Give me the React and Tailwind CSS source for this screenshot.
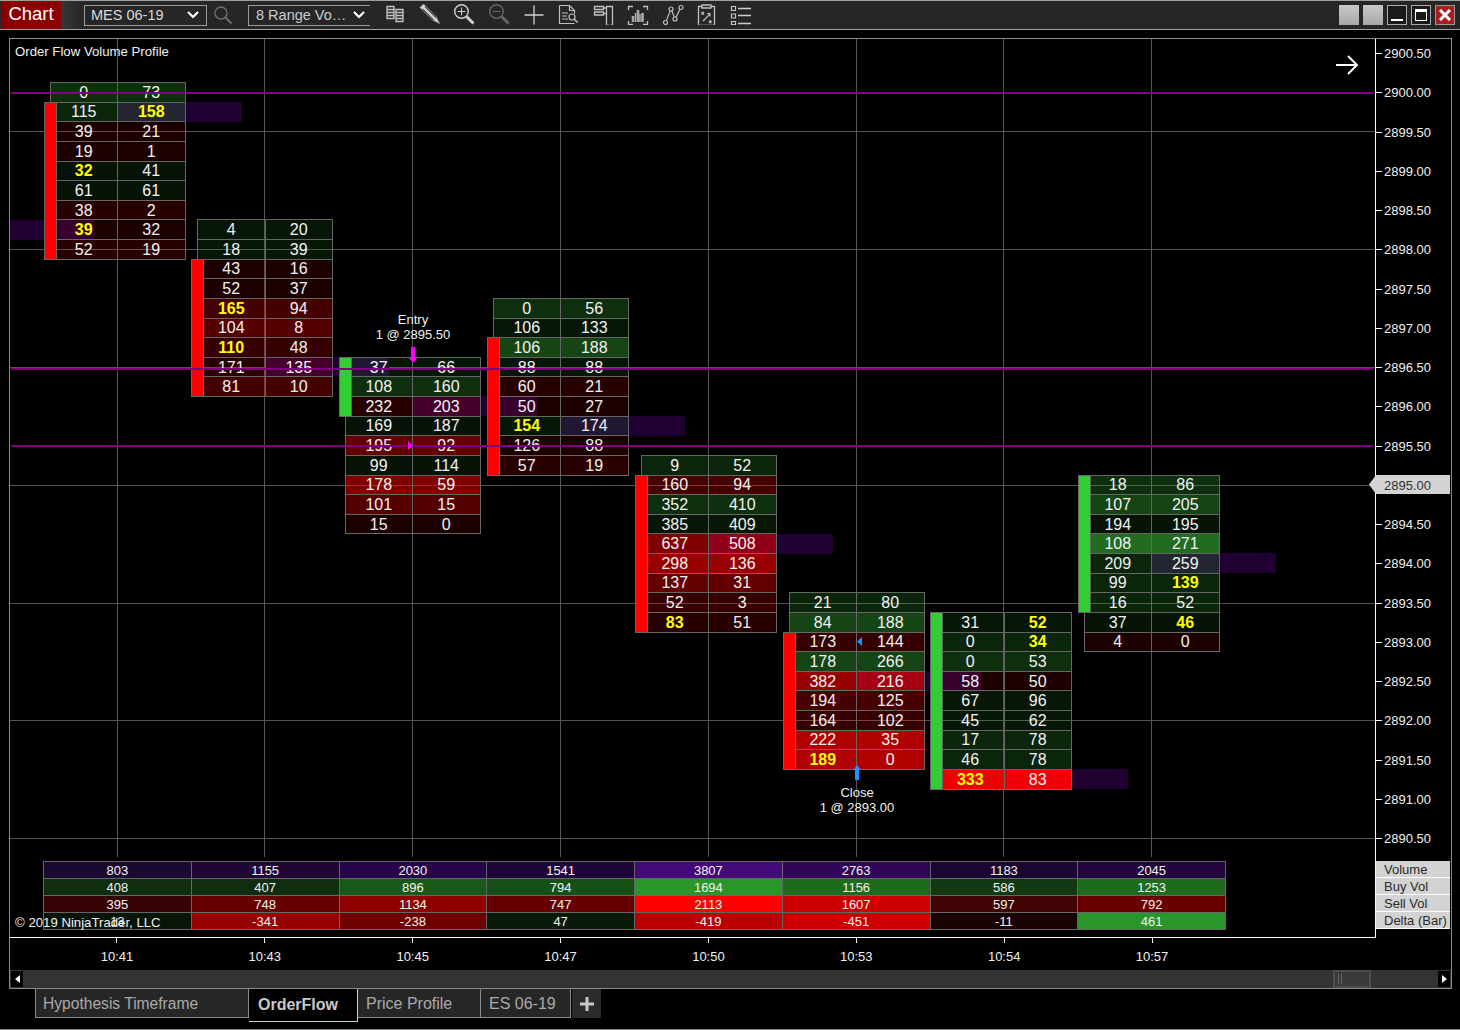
import React from "react";

const ROW = 19.625;
const yOf = (p) => 14 + (2900.5 - p) * 78.5; // y inside the price pane
const CENTERS = [117.5, 265, 412.5, 560.5, 708.5, 856.5, 1004, 1151.5];
const cx = (c) => c - 10; // x inside the price pane

const BG = {
  a: "bg-[#309a30]/12",
  b: "bg-[#309a30]/15",
  c: "bg-[#309a30]/24",
  d: "bg-[#309a30]/30",
  e: "bg-[#309a30]/44",
  f: "bg-[#309a30]/70",
  h: "bg-[#ff0000]/11",
  i: "bg-[#ff0000]/16",
  j: "bg-[#ff0000]/21",
  k: "bg-[#ff0000]/27",
  l: "bg-[#ff0000]/33",
  m: "bg-[#ff0000]/39",
  n: "bg-[#ff0000]/50",
  o: "bg-[#ff0000]/60",
  p: "bg-[#ff0000]/69",
  q: "bg-[#ff0000]/92",
};

const CANDLES = [
  {
    c: 0, price: 2900, body: [1, 8], up: false,
    rows: "0|73|d 115|158*|c 39|21|h 19|1|h 32*|41|a 61|61|a 38|2|i 39*|32|h 52|19|i",
  },
  {
    c: 1, price: 2898.25, body: [2, 8], up: false,
    rows: "4|20|b 18|39|b 43|16|h 52|37|h 165*|94|k 104|8|l 110*|48|j 171|135|i 81|10|k",
  },
  {
    c: 2, price: 2896.5, body: [0, 2], up: true,
    rows: "37|66|b 108|160|d 232|203|i 169|187|a 195|92|m 99|114|a 178|59|n 101|15|l 15|0|h",
  },
  {
    c: 3, price: 2897.25, body: [2, 8], up: false,
    rows: "0|56|d 106|133|b 106|188|e 88|88|b 60|21|i 50|27|h 154*|174|b 126|88|h 57|19|i",
  },
  {
    c: 4, price: 2895.25, body: [1, 8], up: false,
    rows: "9|52|c 160|94|k 352|410|d 385|409|b 637|508|n 298|136|o 137|31|m 52|3|j 83*|51|i",
  },
  {
    c: 5, price: 2893.5, body: [2, 8], up: false,
    rows: "21|80|c 84|188|e 173|144|j 178|266|e 382|216|o 194|125|k 164|102|j 222|35|p 189*|0|p",
  },
  {
    c: 6, price: 2893.25, body: [0, 8], up: true,
    rows: "31|52*|b 0|34*|c 0|53|d 58|50|h 67|96|b 45|62|b 17|78|c 46|78|c 333*|83|q",
  },
  {
    c: 7, price: 2895, body: [0, 6], up: true,
    rows: "18|86|d 107|205|e 194|195|a 108|271|f 209|259|c 99|139*|c 16|52|c 37|46*|a 4|0|h",
  },
];

// volume-profile bars: [centre x of the bar's origin, price]
const BARS = [
  [-30.5, 2898.25],
  [117.5, 2899.75],
  [265, 2896.5],
  [412.5, 2896],
  [560.5, 2895.75],
  [708.5, 2894.25],
  [856.5, 2892.5],
  [1004, 2891.25],
  [1151.5, 2894],
];

const TABLE = [
  [["803", "bg-[#1a0a30]"], ["1155", "bg-[#1f0633]"], ["2030", "bg-[#260648]"], ["1541", "bg-[#1f0638]"], ["3807", "bg-[#440a77]"], ["2763", "bg-[#300558]"], ["1183", "bg-[#1b0633]"], ["2045", "bg-[#21053c]"]],
  [["408", "bg-[#0f2d0f]"], ["407", "bg-[#0f2d0f]"], ["896", "bg-[#185818]"], ["794", "bg-[#175017]"], ["1694", "bg-[#2a962a]"], ["1156", "bg-[#1e6b1e]"], ["586", "bg-[#123a12]"], ["1253", "bg-[#1e6b1e]"]],
  [["395", "bg-[#350303]"], ["748", "bg-[#660000]"], ["1134", "bg-[#900000]"], ["747", "bg-[#660000]"], ["2113", "bg-[#ff0000]"], ["1607", "bg-[#cc0000]"], ["597", "bg-[#400404]"], ["792", "bg-[#6a0000]"]],
  [["13", "bg-[#081408]"], ["-341", "bg-[#990000]"], ["-238", "bg-[#6f0000]"], ["47", "bg-[#0a1a0a]"], ["-419", "bg-[#bb0000]"], ["-451", "bg-[#cc0000]"], ["-11", "bg-[#1a0303]"], ["461", "bg-[#2a962a]"]],
];

const TIMES = ["10:41", "10:43", "10:45", "10:47", "10:50", "10:53", "10:54", "10:57"];
const PRICES = Array.from({ length: 21 }, (_, i) => (2900.5 - i * 0.5).toFixed(2));

function Candle({ candle }) {
  const rows = candle.rows.split(" ").map((r) => r.split("|"));
  return (
    <div
      className="absolute grid grid-cols-2 auto-rows-[19.625px] w-[136px] border-t border-l border-[#666]"
      style={{ left: cx(CENTERS[candle.c]) - 68, top: yOf(candle.price) - ROW / 2 - 0.4 }}
    >
      {rows.map(([l, r, col], i) => (
        <React.Fragment key={i}>
          <Cell v={l} bg={BG[col]} />
          <Cell v={r} bg={BG[col]} />
        </React.Fragment>
      ))}
    </div>
  );
}

function Cell({ v, bg }) {
  const hot = v.endsWith("*");
  return (
    <div
      className={`flex items-center justify-center pt-px border-r border-b border-[#666] text-[16px] leading-none ${bg} ${
        hot ? "font-bold text-[#ffff00]" : "text-[#f2f2f2]"
      }`}
    >
      {hot ? v.slice(0, -1) : v}
    </div>
  );
}

function Body({ candle }) {
  const [from, to] = candle.body;
  return (
    <div
      className={`absolute w-[13px] border border-[#666] ${candle.up ? "bg-[#32cd32]" : "bg-[#ff0000]"}`}
      style={{
        left: cx(CENTERS[candle.c]) - 74,
        top: yOf(candle.price) - ROW / 2 - 0.4 + from * ROW,
        height: (to - from + 1) * ROW + 1,
      }}
    />
  );
}

const S = "#c0c0c0";

function ToolIcon({ className = "", children }) {
  return (
    <svg width="22" height="22" viewBox="0 0 22 22" fill="none" stroke={S} strokeWidth="1" className={`shrink-0 ${className}`}>
      {children}
    </svg>
  );
}

function Chevron() {
  return (
    <svg width="12" height="8" viewBox="0 0 12 8" fill="none" stroke="#fff" strokeWidth="2.2" className="shrink-0">
      <path d="M1 1l5 5 5-5" />
    </svg>
  );
}

function Toolbar() {
  return (
    <div className="flex items-center h-[30px] shrink-0 bg-[#262626] border-t border-b border-[#a0a0a0]">
      <div className="flex items-center justify-center h-[28px] w-[60px] ml-px pb-px bg-[#8b0000] text-white text-[18.500px] leading-none">Chart</div>
      <div className="w-[23px] h-[28px] bg-gradient-to-r from-[#363636] to-[#262626]" />
      <div className="flex items-center justify-between h-[21px] w-[123px] pl-[6px] pr-[7px] border border-[#9a9a9a] text-[#dcdcdc] text-[14.500px] leading-none">
        <span>MES 06-19</span>
        <Chevron />
      </div>
      <svg width="20" height="20" viewBox="0 0 20 20" fill="none" stroke="#6f6f6f" className="ml-[6px] shrink-0">
        <circle cx="8" cy="8" r="6" strokeWidth="1.3" />
        <path d="M12.5 12.5l6 6" strokeWidth="2" />
      </svg>
      <div className="flex items-center justify-between h-[21px] w-[122px] ml-[15px] pl-[7px] pr-[5px] border-l border-t border-b border-[#9a9a9a] text-[#c8ccd4] text-[14.500px] leading-none whitespace-nowrap">
        <span>8 Range Vo…</span>
        <Chevron />
      </div>
      <div className="flex items-center ml-[14px] mb-[2px] gap-[12.700px]">
        <ToolIcon>
          <path d="M3 3.500h7v3H3zM3 6.500h7v3H3zM3 9.500h7v3H3zM3 12.500h7v3H3zM12 6.500h7v3h-7zM12 9.500h7v3h-7zM12 12.500h7v3h-7zM12 15.500h7v3h-7z" strokeWidth="1.4" />
        </ToolIcon>
        <ToolIcon>
          <path d="M1 4.500L4.500 1 17 13.500l3.500 7-7-3.500z" fill="#d4d4d4" stroke="#8a8a8a" />
          <path d="M3.500 6L14.500 17M6 3.500L17 14.500" stroke="#4a4a4a" strokeWidth="1.2" />
        </ToolIcon>
        <ToolIcon>
          <circle cx="8.500" cy="8.500" r="6.800" strokeWidth="1.400" stroke="#d0d0d0" />
          <path d="M8.500 4.500v8M4.500 8.500h8" stroke="#d0d0d0" />
          <path d="M13.500 13.500l7 7" strokeWidth="3" stroke="#d0d0d0" />
        </ToolIcon>
        <ToolIcon>
          <circle cx="8.500" cy="8.500" r="6.800" strokeWidth="1.400" stroke="#666" />
          <path d="M4.500 8.500h8" stroke="#666" />
          <path d="M13.500 13.500l7 7" strokeWidth="3" stroke="#666" />
        </ToolIcon>
        <ToolIcon>
          <path d="M1.500 12h19M11 2.500v19" stroke="#d0d0d0" strokeWidth="1.300" />
        </ToolIcon>
        <ToolIcon>
          <path d="M2.500 2.500h10l5 5v3M17.500 20.500h-15v-18M12.500 2.500v5h5" strokeWidth="1.200" />
          <path d="M5 10h6M5 13h5M5 16h6" strokeWidth="1.200" />
          <circle cx="15" cy="14" r="3" strokeWidth="1.200" />
          <path d="M17 16l3.500 3.500" strokeWidth="1.600" />
        </ToolIcon>
        <ToolIcon>
          <path d="M2.500 3.500h9v3h-9zM2.500 9h9v3h-9zM11.500 5h3M11.500 10.500h3M14.500 3.500h6v19h-6z" strokeWidth="1.300" />
        </ToolIcon>
        <ToolIcon>
          <path d="M1.500 7V3.500H6M16 3.500h4.500V7M1.500 18v3.500H6M16 21.500h4.500V18" strokeWidth="1.300" />
          <path d="M6 19v-6M11 19V7M15.500 19V10" strokeWidth="2.600" stroke="#aaa" />
          <path d="M8.500 19v-9M13 19v-8" strokeWidth="1.200" />
        </ToolIcon>
        <ToolIcon>
          <circle cx="3.500" cy="19.500" r="2" strokeWidth="1.200" />
          <circle cx="9" cy="6" r="2" strokeWidth="1.200" />
          <circle cx="13" cy="16" r="2" strokeWidth="1.200" />
          <circle cx="19" cy="4.500" r="2" strokeWidth="1.200" />
          <path d="M4.300 17.600L8.200 7.900M9.800 7.900l2.500 6.200M14 14.300l4-8" strokeWidth="1.200" />
        </ToolIcon>
        <ToolIcon>
          <path d="M6 3.500H2.500v19h16v-19H15M6 2h9v3H6z" strokeWidth="1.300" />
          <path d="M5.500 9l2.500 2.500M8 9l-2.500 2.500M13 17.500l2.500 2.500M15.500 17.500L13 20M7 18l7-7M11 10.500h3v3" strokeWidth="1.100" />
        </ToolIcon>
        <ToolIcon className="ml-[-1px]">
          <path d="M1.500 3.500h4v4h-4zM1.500 11h4v4h-4zM1.500 18.500h4v3h-4z" strokeWidth="1.200" />
          <path d="M8 5.500h13M8 12.500h13M8 20.500h13" stroke="#d0d0d0" strokeWidth="1.600" />
        </ToolIcon>
      </div>
      <div className="flex items-center ml-auto mr-[5px] mb-[1px] gap-[4px]">
        <div className="w-[20px] h-[20px] bg-gradient-to-b from-[#c9c9c9] to-[#a8a8a8]" />
        <div className="w-[20px] h-[20px] bg-gradient-to-b from-[#c9c9c9] to-[#a8a8a8]" />
        <div className="flex items-end justify-center w-[20px] h-[20px] pb-[3px] bg-[#1a1a1a] border border-[#aaa]">
          <div className="w-[12px] h-[2px] bg-white" />
        </div>
        <div className="flex items-center justify-center w-[20px] h-[20px] bg-[#1a1a1a] border border-[#aaa]">
          <div className="w-[12px] h-[12px] border border-t-[3px] border-white" />
        </div>
        <div className="flex items-center justify-center w-[20px] h-[20px] bg-[#a81f1f] border border-[#999]">
          <svg width="12" height="12" viewBox="0 0 12 12" stroke="#fff" strokeWidth="3">
            <path d="M1 1l10 10M11 1L1 11" />
          </svg>
        </div>
      </div>
    </div>
  );
}

function PricePane() {
  const hLines = [131, 249, 366.5, 484.5, 602.5, 720, 838];
  return (
    <div className="relative isolate h-[818px] shrink-0 overflow-hidden bg-black">
      {hLines.map((y) => (
        <div key={y} className="absolute left-0 right-0 h-px bg-[#555]" style={{ top: y - 39 }} />
      ))}
      {CENTERS.map((c) => (
        <div key={c} className="absolute top-0 bottom-0 w-px bg-[#555]" style={{ left: cx(c) - 1 }} />
      ))}
      <div className="absolute left-[5px] top-[5px] text-[13.200px] leading-[16px] text-[#f0f0f0]">Order Flow Volume Profile</div>

      {BARS.map(([x, p]) => (
        <div
          key={p}
          className="absolute h-[20px] w-[124px] bg-[#200033]"
          style={{ left: cx(x), top: yOf(p) - 10 }}
        />
      ))}
      {CANDLES.map((cd) => (
        <Candle key={cd.c} candle={cd} />
      ))}
      {CANDLES.map((cd) => (
        <Body key={cd.c} candle={cd} />
      ))}

      {[2900, 2896.5, 2895.5].map((p) => (
        <div
          key={p}
          className="absolute left-[1px] right-[2px] h-[2px] bg-[#800080]"
          style={{ top: Math.floor(yOf(p)) + (p === 2896.5 ? 1 : 0) }}
        />
      ))}

      {/* trade markers */}
      <div className="absolute left-[353px] top-[274px] w-[100px] text-center text-[13px] leading-[14.500px] text-[#f0f0f0]">
        Entry
        <br />1 @ 2895.50
      </div>
      <svg className="absolute left-[398px] top-[308px]" width="10" height="16" viewBox="0 0 10 16" fill="#ff00ff">
        <path d="M3 0h4v11h2l-4 5-4-5h2z" />
      </svg>
      <svg className="absolute left-[398px] top-[402px]" width="5" height="9" viewBox="0 0 5 9" fill="#ff00ff">
        <path d="M0 0l5 4.500L0 9z" />
      </svg>
      <svg className="absolute left-[847px] top-[598px]" width="5" height="9" viewBox="0 0 5 9" fill="#1e90ff">
        <path d="M5 0L0 4.500 5 9z" />
      </svg>
      <svg className="absolute left-[842px] top-[726px]" width="10" height="15" viewBox="0 0 10 15" fill="#1e90ff">
        <path d="M5 0l4 5H7v10H3V5H1z" />
      </svg>
      <div className="absolute left-[797px] top-[747px] w-[100px] text-center text-[13px] leading-[14.500px] text-[#f0f0f0]">
        Close
        <br />1 @ 2893.00
      </div>

      <svg className="absolute left-[1326px] top-[15px]" width="23" height="22" viewBox="0 0 23 22" fill="none" stroke="#fff" strokeWidth="2">
        <path d="M0 11h21M12 2l9 9-9 9" />
      </svg>
    </div>
  );
}

function LowerPane() {
  return (
    <div className="relative flex-1 pt-[4px] pl-[33px] text-[13px] leading-none text-[#f2f2f2]">
      <div className="w-[1183px] border-t border-l border-[#666]">
        {TABLE.map((row, i) => (
          <div key={i} className="grid grid-cols-8 h-[17px]">
            {row.map(([v, bg], j) => (
              <div key={j} className={`flex items-center justify-center border-r border-b border-[#666] ${bg}`}>
                {v}
              </div>
            ))}
          </div>
        ))}
      </div>
      <div className="absolute left-[5px] top-[58px] text-[13.200px] leading-[16px] text-[#f0f0f0]">© 2019 NinjaTrader, LLC</div>
    </div>
  );
}

function PriceAxis() {
  return (
    <div className="flex flex-col w-[75px] shrink-0 text-[13px] leading-none text-[#f0f0f0]">
      <div className="h-[818px] shrink-0 overflow-hidden">
        <div className="-mt-[5.100px]">
          {PRICES.map((p) => (
            <div key={p} className="flex items-center h-[39.250px]">
              <div className="w-[6px] h-px bg-white mr-[2px]" />
              <span>{p}</span>
            </div>
          ))}
        </div>
      </div>
      <div className="pt-[4px] pr-[1px]">
        {["Volume", "Buy Vol", "Sell Vol", "Delta (Bar)"].map((t) => (
          <div key={t} className="flex items-center h-[17px] pl-[8px] pt-px bg-[#d3d3d3] border-b border-white text-[#2a2a2a] whitespace-nowrap">
            {t}
          </div>
        ))}
      </div>
    </div>
  );
}

function PriceMarker() {
  return (
    <div className="absolute left-[1359px] top-[436px] flex h-[19px] w-[81px] text-[13px] leading-none text-[#333]">
      <svg width="7" height="19" viewBox="0 0 7 19" fill="#d3d3d3" className="shrink-0">
        <path d="M7 0v19L0 9.500z" />
      </svg>
      <div className="flex items-center flex-1 pl-[8px] pt-px bg-[#d3d3d3]">2895.00</div>
    </div>
  );
}

function TimeAxis() {
  return (
    <div className="h-[32px] shrink-0 pl-[33px] text-[13px] leading-none text-[#f0f0f0]">
      <div className="grid grid-cols-8 w-[1183px]">
        {TIMES.map((t) => (
          <div key={t} className="flex flex-col items-center">
            <div className="w-px h-[5px] bg-white" />
            <div className="mt-[7px]">{t}</div>
          </div>
        ))}
      </div>
    </div>
  );
}

function ScrollBar() {
  return (
    <div className="flex items-center h-[18px] shrink-0 bg-[#333]">
      <div className="flex items-center justify-center w-[12px] h-[16px] ml-px bg-black">
        <svg width="5" height="8" viewBox="0 0 5 8" fill="#fff">
          <path d="M5 0v8L0 4z" />
        </svg>
      </div>
      <div className="flex items-center gap-[2px] w-[38px] h-[18px] ml-auto pl-[3px] bg-[#3a3a3a] border-2 border-[#4d4d4d]">
        <div className="w-px h-[10px] bg-[#666]" />
        <div className="w-px h-[10px] bg-[#666]" />
      </div>
      <div className="flex items-center justify-center w-[12px] h-[16px] ml-[67px] mr-px bg-black">
        <svg width="5" height="8" viewBox="0 0 5 8" fill="#fff">
          <path d="M0 0v8l5-4z" />
        </svg>
      </div>
    </div>
  );
}

function Tabs() {
  const tab = "flex items-center h-[29px] pt-[2px] bg-[#262626] border-b border-r border-[#8a8a8a] leading-none text-[#aaa]";
  return (
    <div className="flex items-start h-[40px] ml-[35px]">
      <div className={`${tab} w-[214px] pl-[7px] border-l text-[15.600px]`}>Hypothesis Timeframe</div>
      <div className="flex items-center h-[33px] w-[109px] pl-[9px] bg-black border-b border-r border-[#cfcfcf] text-[16px] font-bold leading-none text-[#c8c8c8]">OrderFlow</div>
      <div className={`${tab} w-[123px] pl-[8px] text-[16px]`}>Price Profile</div>
      <div className={`${tab} w-[90px] pl-[8px] text-[16px]`}>ES 06-19</div>
      <div className="flex items-center justify-center h-[29px] w-[29px] ml-px bg-[#2a2a2a] text-[#c8c8c8]">
        <svg width="14" height="14" viewBox="0 0 14 14" stroke="#c8c8c8" strokeWidth="3">
          <path d="M7 0v14M0 7h14" />
        </svg>
      </div>
    </div>
  );
}

export default function App() {
  return (
    <div className="flex flex-col w-[1460px] h-[1030px] overflow-hidden bg-black font-['Liberation_Sans',Arial,sans-serif] border-b border-[#8a8a8a]">
      <Toolbar />
      <div className="relative flex flex-col w-[1443px] h-[951px] shrink-0 ml-[9px] mt-[8px] border border-[#8a8a8a]">
        <div className="flex h-[899px] shrink-0">
          <div className="flex flex-col w-[1366px] shrink-0 border-r border-b border-white">
            <PricePane />
            <LowerPane />
          </div>
          <PriceAxis />
        </div>
        <PriceMarker />
        <TimeAxis />
        <ScrollBar />
      </div>
      <Tabs />
    </div>
  );
}
